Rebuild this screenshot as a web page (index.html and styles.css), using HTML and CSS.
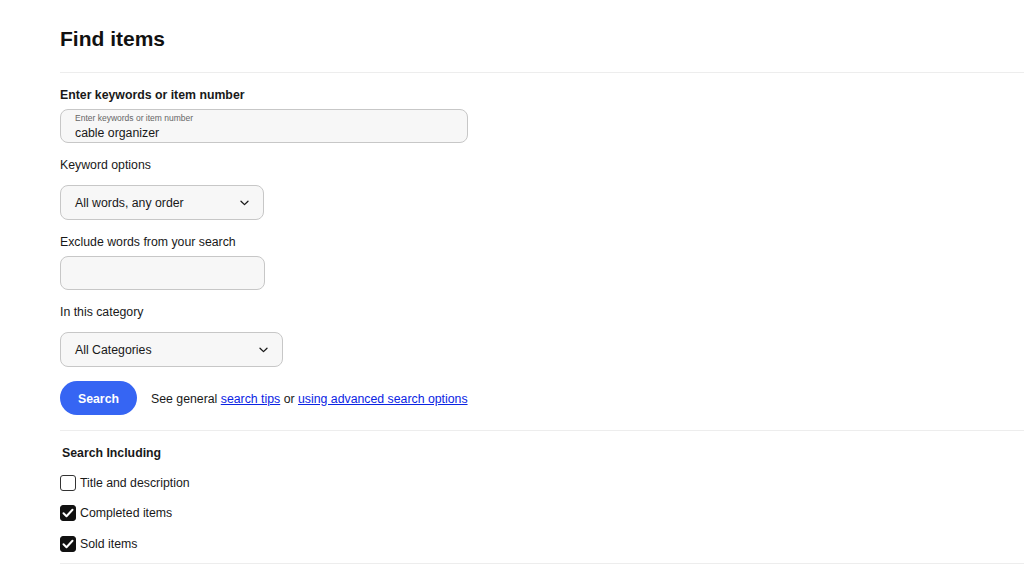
FILE: index.html
```html
<!DOCTYPE html>
<html lang="en">
  <head>
    <meta charset="UTF-8" />
    <meta name="viewport" content="width=device-width, initial-scale=1.0" />
    <title>Find items</title>
    <link rel="stylesheet" href="styles.css">
  </head>

  <body>
    <main class="page">
      <h1 class="title">Find items</h1>
      <hr class="divider" />

      <form class="search-form" onsubmit="return false">
        <label class="field-label bold" for="keywords">Enter keywords or item number</label>
        <div class="text-box floating">
          <span class="float-label">Enter keywords or item number</span>
          <input id="keywords" type="text" value="cable organizer" />
        </div>

        <label class="field-label">Keyword options</label>
        <div class="select-box keyword-select">
          <span>All words, any order</span>
          <svg class="chevron" width="9" height="6" viewBox="0 0 9 6">
            <path d="M1 1.2l3.5 3.4 3.5-3.4" fill="none" stroke="#191919" stroke-width="1.3" stroke-linecap="round" stroke-linejoin="round" />
          </svg>
        </div>

        <label class="field-label tight" for="exclude">Exclude words from your search</label>
        <div class="text-box exclude-box">
          <input id="exclude" type="text" />
        </div>

        <label class="field-label">In this category</label>
        <div class="select-box category-select">
          <span>All Categories</span>
          <svg class="chevron" width="9" height="6" viewBox="0 0 9 6">
            <path d="M1 1.2l3.5 3.4 3.5-3.4" fill="none" stroke="#191919" stroke-width="1.3" stroke-linecap="round" stroke-linejoin="round" />
          </svg>
        </div>

        <div class="actions">
          <button class="search-btn" type="submit">Search</button>
          <p class="tips">See general <a href="#">search tips</a> or <a href="#">using advanced search options</a></p>
        </div>

        <hr class="divider section-divider" />

        <fieldset class="including">
          <legend class="field-label bold">Search Including</legend>
          <label class="check-row">
            <span class="check"></span>
            Title and description
          </label>
          <label class="check-row">
            <span class="check checked">
              <svg width="12" height="10" viewBox="0 0 12 10">
                <path d="M1.5 5.2l3 3 6-6.5" fill="none" stroke="#fff" stroke-width="2" stroke-linecap="round" stroke-linejoin="round" />
              </svg>
            </span>
            Completed items
          </label>
          <label class="check-row">
            <span class="check checked">
              <svg width="12" height="10" viewBox="0 0 12 10">
                <path d="M1.5 5.2l3 3 6-6.5" fill="none" stroke="#fff" stroke-width="2" stroke-linecap="round" stroke-linejoin="round" />
              </svg>
            </span>
            Sold items
          </label>
        </fieldset>

        <hr class="divider bottom-divider" />
      </form>
    </main>
  </body>
</html>
```

FILE: styles.css
```css
* {
  box-sizing: border-box;
  margin: 0;
  padding: 0;
}

body {
  font-family: "Liberation Sans", Arial, sans-serif;
  font-size: 12.3px;
  color: #191919;
  background-color: #fff;
}

.page {
  padding: 27px 0 0 60px;
}

.title {
  font-size: 21px;
  line-height: 24px;
  font-weight: bold;
  color: #111;
}

.divider {
  border: none;
  border-top: 1px solid #ededed;
  margin-top: 21px;
}

.search-form {
  display: flex;
  flex-direction: column;
  align-items: flex-start;
}

.field-label {
  display: block;
  line-height: 16px;
  margin-top: 14px;
  margin-bottom: 12px;
}

.field-label.bold {
  font-weight: bold;
  margin-bottom: 6px;
}

.field-label.tight {
  margin-bottom: 6px;
}

.text-box {
  background-color: #f7f7f7;
  border: 1px solid #c7c7c7;
  border-radius: 8px;
  height: 34px;
}

.text-box input {
  border: none;
  background: transparent;
  font-family: inherit;
  font-size: 12.3px;
  color: #191919;
  outline: none;
  width: 100%;
  height: 100%;
  padding: 0 13px;
}

.floating {
  width: 408px;
  padding: 3px 14px 0;
}

.floating .float-label {
  display: block;
  font-size: 8.5px;
  line-height: 10px;
  color: #666;
}

.floating input {
  height: 19px;
  padding: 1px 0 0;
}

.exclude-box {
  width: 205px;
}

.select-box {
  display: flex;
  align-items: center;
  justify-content: space-between;
  height: 35px;
  padding: 1px 14px 0 14px;
  background-color: #f7f7f7;
  border: 1px solid #c7c7c7;
  border-radius: 8px;
}

.keyword-select {
  width: 204px;
}

.category-select {
  width: 223px;
}

.chevron {
  display: block;
}

.actions {
  display: flex;
  align-items: center;
  gap: 14px;
  margin-top: 14px;
}

.search-btn {
  width: 77px;
  height: 34px;
  padding-top: 1px;
  border: none;
  border-radius: 17px;
  background-color: #3665f3;
  color: #fff;
  font-family: inherit;
  font-size: 12.3px;
  font-weight: bold;
  cursor: pointer;
}

.tips {
  padding-top: 1px;
}

.tips a {
  color: #0b24e4;
  text-decoration: underline;
}

.section-divider {
  align-self: stretch;
  margin-top: 15px;
}

.including {
  border: none;
  padding-left: 2px;
  align-self: stretch;
}

.including legend {
  float: left;
  width: 100%;
  margin-bottom: 7px;
}

.check-row {
  clear: left;
  display: flex;
  align-items: center;
  gap: 4px;
  height: 30.5px;
  margin-left: -2px;
  padding-top: 1px;
}

.check {
  width: 16px;
  height: 16px;
  border: 1px solid #333;
  border-radius: 3px;
  display: flex;
  align-items: center;
  justify-content: center;
}

.check.checked {
  background-color: #111;
  border-color: #111;
}

.bottom-divider {
  align-self: stretch;
  margin-top: 4px;
}
```
